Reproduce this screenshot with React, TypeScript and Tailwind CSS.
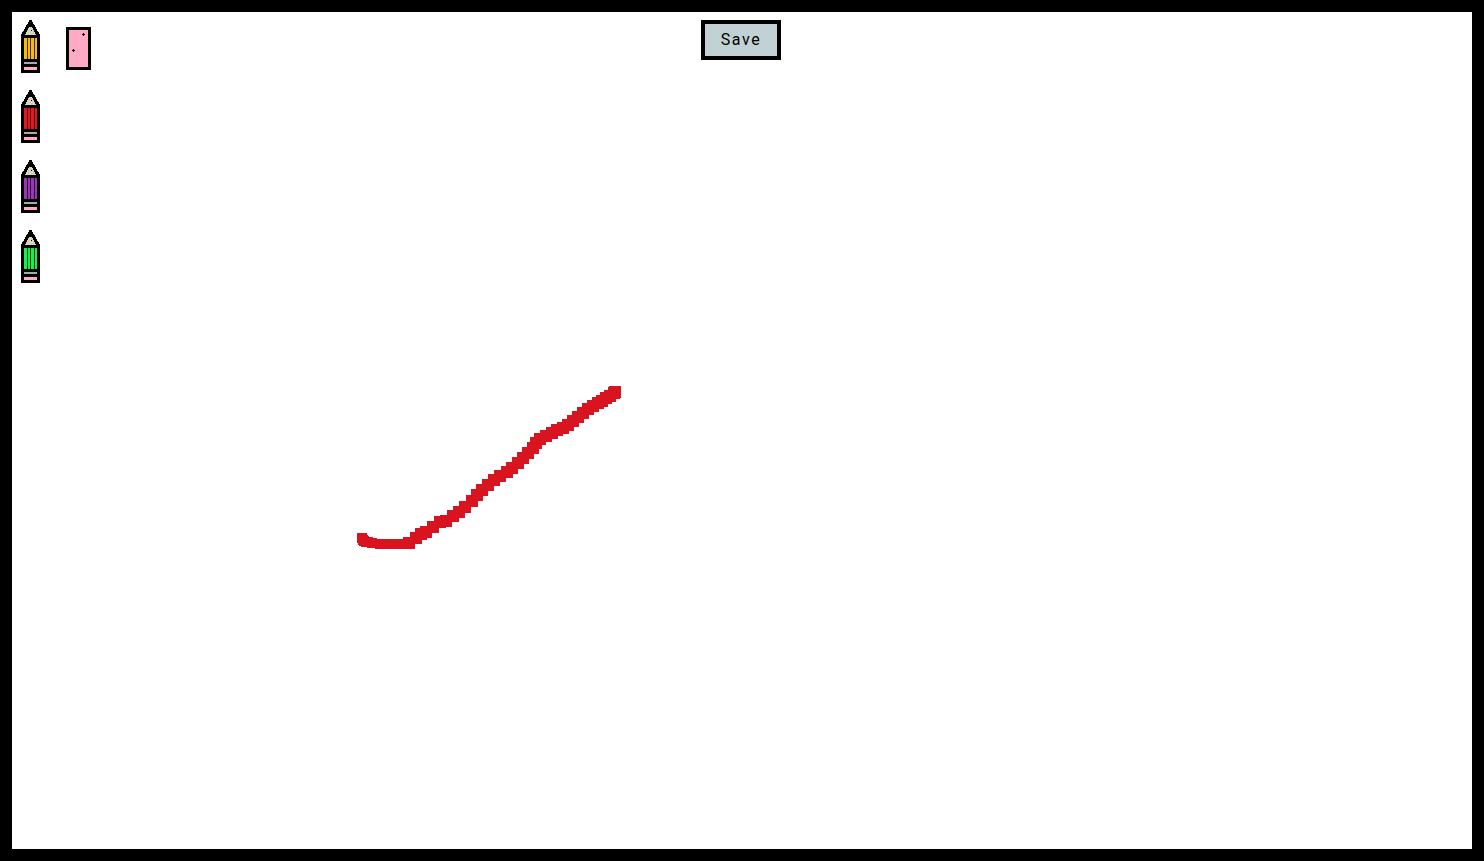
const stroke = [
  [357, 533], [358, 535], [359, 536], [361, 537], [363, 537], [367, 538], [375, 539], [385, 539], [395, 539], [403, 539],
  [403, 537], [410, 532], [415, 528], [420, 526], [427, 521], [434, 516], [440, 515], [447, 510], [453, 506],
  [459, 501], [466, 495], [471, 489], [476, 484], [482, 479], [488, 474], [494, 470], [501, 466], [506, 462],
  [512, 457], [517, 452], [522, 447], [527, 442], [530, 437], [534, 433], [540, 430], [546, 427], [551, 424],
  [557, 422], [562, 419], [567, 415], [572, 411], [577, 407], [582, 403], [587, 400], [592, 397], [596, 395],
  [600, 392], [604, 390], [608, 387], [609, 386],
];

function Pencil({ color }: { color: string }) {
  return (
    <svg width="19" height="53" viewBox="0 0 19 53" shapeRendering="crispEdges" className="block">
      <polygon points="8.5,0 10.5,0 19,15 19,53 0,53 0,15" fill="#000" />
      <polygon points="8,7 11,7 15,15 4,15" fill="#d9d4bd" />
      <rect x="10" y="10" width="1" height="1" fill="#000" />
      <rect x="3" y="18" width="13" height="21" fill={color} />
      <rect x="6" y="18" width="1" height="21" fill="#000" opacity="0.75" />
      <rect x="9" y="18" width="1" height="21" fill="#000" opacity="0.75" />
      <rect x="13" y="18" width="1" height="21" fill="#000" opacity="0.75" />
      <rect x="3" y="42" width="13" height="2" fill="#a9a9a9" />
      <rect x="3" y="47" width="13" height="3" fill="#ffabc6" />
    </svg>
  );
}

function Eraser() {
  return (
    <svg width="25" height="43" viewBox="0 0 25 43" shapeRendering="crispEdges" className="block">
      <rect width="25" height="43" fill="#000" />
      <rect x="3" y="3" width="19" height="37" fill="#ffabc6" />
      <rect x="16" y="7" width="3" height="1" fill="#000" />
      <rect x="17" y="6" width="1" height="3" fill="#000" />
      <rect x="6" y="23" width="3" height="1" fill="#000" />
      <rect x="7" y="22" width="1" height="3" fill="#000" />
    </svg>
  );
}

export default function App() {
  return (
    <div className="relative h-[861px] overflow-hidden border-[12px] border-black bg-white">
      <div className="grid grid-cols-[1fr_auto_1fr] items-start pt-2 pl-[9px] pr-[11px]">
        <div className="flex items-start gap-[26px]">
          <div className="flex flex-col gap-[17px]">
            <Pencil color="#f5b90f" />
            <Pencil color="#e8141f" />
            <Pencil color="#9a35b5" />
            <Pencil color="#17f04a" />
          </div>
          <div className="mt-[7px]">
            <Eraser />
          </div>
        </div>
        <button className="flex h-10 w-20 items-center justify-center border-4 border-black bg-[#c2d1d4] font-['Roboto',sans-serif] text-base tracking-[0.1em] text-black">
          Save
        </button>
        <div />
      </div>
      {/* the drawing on the canvas, coordinates are page pixels */}
      <svg width="1484" height="861" shapeRendering="crispEdges" className="absolute -left-3 -top-3">
        {stroke.map(([x, y], i) => (
          <rect key={i} x={x} y={y} width={i < 10 ? 10 : 12} height={i < 10 ? 10 : 12} fill="#d7141f" />
        ))}
      </svg>
    </div>
  );
}
